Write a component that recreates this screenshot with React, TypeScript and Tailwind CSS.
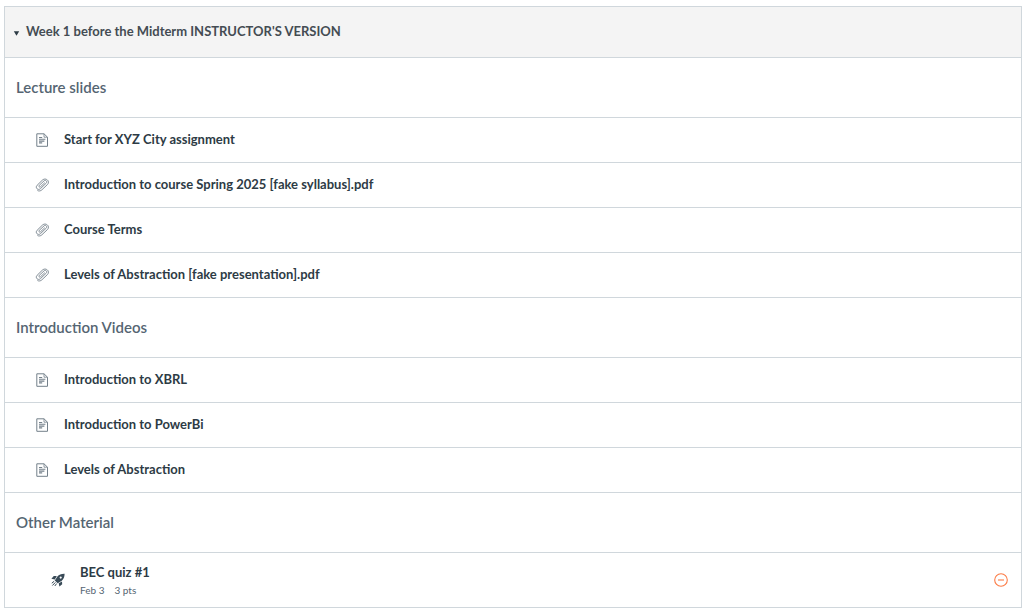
import React from "react";

type ItemKind = "page" | "file";

interface Item {
  kind: ItemKind;
  title: string;
}

interface Section {
  heading: string;
  items: Item[];
}

const sections: Section[] = [
  {
    heading: "Lecture slides",
    items: [
      { kind: "page", title: "Start for XYZ City assignment" },
      { kind: "file", title: "Introduction to course Spring 2025 [fake syllabus].pdf" },
      { kind: "file", title: "Course Terms" },
      { kind: "file", title: "Levels of Abstraction [fake presentation].pdf" },
    ],
  },
  {
    heading: "Introduction Videos",
    items: [
      { kind: "page", title: "Introduction to XBRL" },
      { kind: "page", title: "Introduction to PowerBi" },
      { kind: "page", title: "Levels of Abstraction" },
    ],
  },
  { heading: "Other Material", items: [] },
];

function PageIcon() {
  return (
    <svg viewBox="0 0 14 14" className="size-3.5 shrink-0" fill="none" stroke="#74808a" aria-hidden="true">
      <path d="M1.8 0.8H9L12.5 4.2V13.3H1.8Z" />
      <path d="M9 0.8V4.2H12.5" strokeWidth="0.8" />
      <path d="M4 4.5H7.2M4 6.3H10.4M4 8.1H9.4M4 9.9H7.2" strokeWidth="1.1" />
    </svg>
  );
}

function ClipIcon() {
  return (
    <svg viewBox="0 0 14 14" className="size-3.5 shrink-0" fill="none" stroke="#74808a" strokeWidth="0.9" strokeLinecap="round" strokeLinejoin="round" aria-hidden="true">
      <path d="M9.6 4.9 5.6 8.7C4.5 9.7 3.2 8.4 4.2 7.4L9 2.9C10.7 1.4 12.8 3.6 11.2 5.2L5.4 10.7C3 12.8-.3 9.7 2.1 7.3L7.3 2.2C10.5-.9 15.5 3 12.6 6.4L6.8 11.9C5.6 13 4 13.3 2.8 12.7" />
    </svg>
  );
}

function RocketIcon() {
  return (
    <svg viewBox="0 0 14 14" className="size-3.5 shrink-0" fill="#394b58" aria-hidden="true">
      <path fillRule="evenodd" d="M13.6 .8C10.4.7 8.1 1.6 6.4 3.4L3.8 7.4 6.7 10.3 10.8 7.7C12.7 5.9 13.6 3.8 13.6.8ZM9.7 3.5a1.1 1.1 0 1 1 0 2.2 1.1 1.1 0 0 1 0-2.2Z" />
      <path d="M5.8 3 2.8 2.9.4 5.7 3.8 6.4ZM11 8.4 11.2 11.3 8.4 13.6 7.7 10.3Z" />
      <path d="M3.2 8.2.8 10.2M4.4 9.4 1.4 12.5M5.6 10.6 3.8 13" stroke="#394b58" strokeWidth="1" />
    </svg>
  );
}

function ItemRow({ kind, title }: Item) {
  return (
    <li className="flex h-[45px] items-center border-b border-[#d0d7dc] pl-[30px]">
      {kind === "page" ? <PageIcon /> : <ClipIcon />}
      <a href="#" className="ml-[15px] pb-0.5 text-[13px] leading-5 font-bold text-[#2d3b45]">
        {title}
      </a>
    </li>
  );
}

export default function App() {
  return (
    <main className="bg-white pt-1.5 pr-0.5 pl-1 font-['Lato',sans-serif]">
      <section className="border-x border-t border-[#d0d7dc]">
        <h2 className="border-b border-[#d0d7dc] bg-[#f4f4f4]">
          <button type="button" aria-expanded="true" className="flex h-[50px] w-full items-center pb-0.5 pl-2 text-[13px] leading-5 font-bold text-[#444c53]">
            <svg viewBox="0 0 7 5" className="mt-1 mr-1.5 h-[5px] w-[7px]" fill="#2d3b45" aria-hidden="true">
              <path d="M0.8 0.3H6.2L3.5 4.8Z" />
            </svg>
            Week 1 before the Midterm INSTRUCTOR'S VERSION
          </button>
        </h2>
        {sections.map((section) => (
          <React.Fragment key={section.heading}>
            <h3 className="flex h-[60px] items-center border-b border-[#d0d7dc] pb-px pl-[11px] text-[15px] leading-5 font-semibold text-[#556572]">
              {section.heading}
            </h3>
            {section.items.length > 0 && (
              <ul>
                {section.items.map((item) => (
                  <ItemRow key={item.title} {...item} />
                ))}
              </ul>
            )}
          </React.Fragment>
        ))}
        <ul>
          <li className="flex h-[55px] items-center border-b border-[#d0d7dc] pr-[13px] pl-[46px]">
            <RocketIcon />
            <div className="ml-[15px] flex-1">
              <a href="#" className="block text-[13px] leading-5 font-bold text-[#2d3b45]">
                BEC quiz #1
              </a>
              <p className="flex gap-2.5 text-[10px] leading-4 text-[#556572]">
                <span>Feb 3</span>
                <span>3 pts</span>
              </p>
            </div>
            <button type="button" aria-label="Unpublished">
              <svg viewBox="0 0 14 14" className="block size-3.5" fill="none" stroke="#fc7b45" strokeWidth="1.1" aria-hidden="true">
                <circle cx="7" cy="7" r="6.3" />
                <path d="M4 7H10" />
              </svg>
            </button>
          </li>
        </ul>
      </section>
    </main>
  );
}
